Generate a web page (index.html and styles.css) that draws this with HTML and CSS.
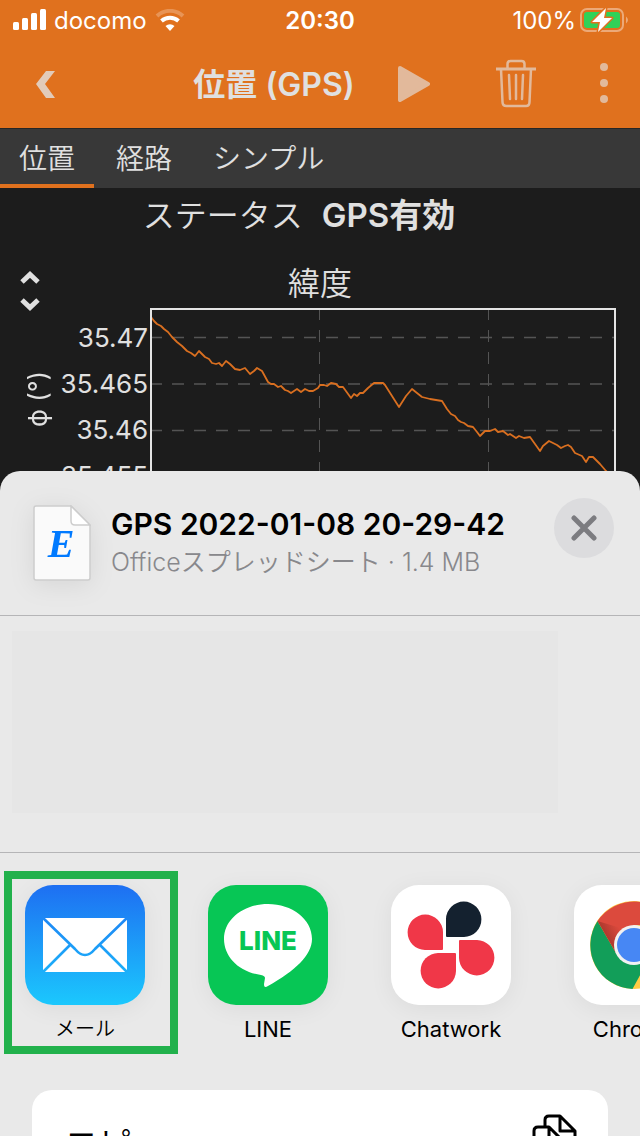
FILE: index.html
```html
<!DOCTYPE html>
<html lang="ja">
<head>
  <meta charset="UTF-8">
  <meta name="viewport" content="width=device-width, initial-scale=1.0">
  <title>位置 (GPS)</title>
  <link rel="stylesheet" href="styles.css">
</head>
<body>

<header class="top">
  <div class="status-bar">
    <div class="carrier">
      <svg width="34" height="22" viewBox="0 0 34 22" fill="#fff">
        <rect x="1" y="13" width="6" height="8" rx="1.5"/>
        <rect x="10" y="9" width="6" height="12" rx="1.5"/>
        <rect x="19" y="4" width="6" height="17" rx="1.5"/>
        <rect x="28" y="0" width="6" height="21" rx="1.5"/>
      </svg>
      <span>docomo</span>
      <svg width="30" height="22" viewBox="0 0 30 22" fill="none" stroke="#fff">
        <path d="M2 7A19 19 0 0 1 28 7" stroke-width="4" opacity=".25"/>
        <path d="M6.500 12A13 13 0 0 1 23.500 12" stroke-width="4"/>
        <path d="M15 22L10.500 17A7 7 0 0 1 19.500 17Z" fill="#fff" stroke="none"/>
      </svg>
    </div>
    <time class="clock">20:30</time>
    <div class="battery">
      <span>100%</span>
      <svg width="48" height="24" viewBox="0 0 48 24">
        <rect x="1" y="1" width="42" height="22" rx="6" fill="none" stroke="#fff" stroke-opacity=".4" stroke-width="2"/>
        <path d="M46 8.500Q50 12 46 15.500Z" fill="#fff" opacity=".4"/>
        <rect x="4" y="4" width="36" height="16" rx="3" fill="#30d158"/>
        <path d="M26 0L12 14H20L18 24L32 10H24Z" fill="#fff" stroke="#e0711e" stroke-width="3" stroke-linejoin="round" paint-order="stroke"/>
      </svg>
    </div>
  </div>

  <div class="app-bar">
    <button class="back" aria-label="戻る">
      <svg width="19" height="28" viewBox="0 0 19 28"><path d="M10 1H19L9 14L19 28H10L0 14Z" fill="#e2cbb9"/></svg>
    </button>
    <h1>位置 (GPS)</h1>
    <button class="play" aria-label="開始">
      <svg width="32" height="36" viewBox="0 0 32 36"><path d="M2 2L30 18L2 34Z" fill="#e2b99b" stroke="#e2b99b" stroke-width="4" stroke-linejoin="round"/></svg>
    </button>
    <button class="trash" aria-label="削除">
      <svg width="42" height="50" viewBox="0 0 42 50" fill="none" stroke="#e2b99b" stroke-width="2.500">
        <path d="M1 10H41" stroke-width="3"/>
        <path d="M12.500 9V5Q12.500 2 15.500 2H26.500Q29.500 2 29.500 5V9"/>
        <path d="M6 10L7.500 43Q7.500 47 11.500 47H31Q34.500 47 34.500 43L36 10"/>
        <path d="M14 16L15 40M21 16V40M28 16L27 40" stroke-linecap="round"/>
      </svg>
    </button>
    <button class="more" aria-label="メニュー">
      <svg width="8" height="42" viewBox="0 0 8 42" fill="#e2b99b"><circle cx="4" cy="4" r="4"/><circle cx="4" cy="20" r="4"/><circle cx="4" cy="36" r="4"/></svg>
    </button>
  </div>
</header>

<nav class="tabs">
  <a href="#position" class="active">位置</a>
  <a href="#route">経路</a>
  <a href="#simple">シンプル</a>
</nav>

<main>
  <p class="gps-status">ステータス <strong>GPS有効</strong></p>

  <section class="chart">
    <div class="axis">
      <button class="sort" aria-label="並べ替え">
        <svg width="20" height="40" viewBox="0 0 20 40" fill="none" stroke="#e0e0e0" stroke-width="5"><path d="M2 11L10 3.500L18 11"/><path d="M2 29L10 36.500L18 29"/></svg>
      </button>
      <span class="unit">ϕ (°)</span>
    </div>
    <ul class="ticks">
      <li>35.47</li>
      <li>35.465</li>
      <li>35.46</li>
      <li>35.455</li>
    </ul>
    <figure>
      <figcaption>緯度</figcaption>
      <svg class="plot" viewBox="0 0 466 192" preserveAspectRatio="none" fill="none">
        <g stroke="#545454" stroke-dasharray="12 10">
          <path d="M0 29.500H466M0 76H466M0 122.500H466" stroke-width="1.500"/>
          <path d="M169.500 0V192M338.500 0V192"/>
        </g>
        <polyline stroke="#d96f20" stroke-width="1.800" stroke-linejoin="round" points="1,9 4,13 7,16 11,18 14,21 18,24 22,29 27,34 32,38 37,43 41,45 45,48 49,43 52,46 55,49 59,51 62,55 66,56 69,55 72,58 76,53 80,56 85,61 90,62 95,60 100,66 104,63 107,60 112,63 118,74 121,76 124,76 128,79 131,78 135,82 138,83 141,85 144,83 147,81 151,84 155,81 159,83 163,83 168,80 170,77 174,77 177,78 181,75 186,76 189,79 193,79 201,90 204,86 207,88 210,85 213,85 218,80 224,75 233,75 235,77 242,88 249,99 256,88 262,81 267,85 272,89 276,90 280,91 286,92 292,93 297,101 301,106 305,108 308,112 311,114 314,115 318,118 323,119 327,124 330,128 335,123 340,123 345,121 348,124 353,123 358,127 360,126 366,130 369,128 374,130 380,129 385,136 390,143 393,138 399,133 403,135 407,137 411,140 415,138 418,137 421,139 425,145 432,148 436,154 439,149 443,149 450,156 456,163 466,172"/>
        <path d="M1 192V1H465V192" stroke="#e4e4e4" stroke-width="2"/>
      </svg>
    </figure>
  </section>
</main>

<section class="sheet">
  <div class="sheet-header">
    <svg class="file-icon" width="58" height="76" viewBox="0 0 58 76">
      <path d="M3 1H38L57 20V73Q57 75 55 75H3Q1 75 1 73V3Q1 1 3 1Z" fill="#fafafa" stroke="#cdcdcd" stroke-width="1.500"/>
      <path d="M38 1V16Q38 20 42 20H57Z" fill="#fff" stroke="#cdcdcd" stroke-width="1.500"/>
      <text class="file-letter" x="28" y="52" text-anchor="middle">E</text>
    </svg>
    <div class="file-info">
      <h2>GPS 2022-01-08 20-29-42</h2>
      <p>Officeスプレッドシート · 1.4 MB</p>
    </div>
    <button class="close" aria-label="閉じる">
      <svg width="26" height="26" viewBox="0 0 26 26" stroke="#7c7c80" stroke-width="5" stroke-linecap="round"><path d="M3 3L23 23M23 3L3 23"/></svg>
    </button>
  </div>

  <div class="people">
    <div class="people-blank"></div>
  </div>

  <div class="apps">
    <a href="#mail" class="app selected">
      <svg class="app-icon" viewBox="0 0 120 120">
        <defs>
          <linearGradient id="sky" x1="0" y1="0" x2="0" y2="1"><stop offset="0" stop-color="#1e6ff2"/><stop offset="1" stop-color="#1bc8fd"/></linearGradient>
          <mask id="folds">
            <rect x="18" y="33" width="84" height="54" rx="2" fill="#fff"/>
            <path d="M17 32L50 64Q60 76 70 64L103 32M17 88L45 60M103 88L75 60" fill="none" stroke="#000" stroke-width="2.600"/>
          </mask>
        </defs>
        <rect width="120" height="120" fill="url(#sky)"/>
        <rect x="18" y="33" width="84" height="54" fill="#fff" mask="url(#folds)"/>
      </svg>
      <span>メール</span>
    </a>
    <a href="#line" class="app">
      <svg class="app-icon" viewBox="0 0 120 120">
        <rect width="120" height="120" fill="#07c655"/>
        <path d="M60 19C84 19 104 34 104 54C104 70 87 86 60 101C57 103 56 102 56 99L57 93Q57 91 53 90C31 87 16 72 16 54C16 34 36 19 60 19Z" fill="#fff"/>
        <text class="line-mark" x="60" y="65" text-anchor="middle">LINE</text>
      </svg>
      <span>LINE</span>
    </a>
    <a href="#chatwork" class="app">
      <svg class="app-icon" viewBox="0 0 120 120">
        <rect width="120" height="120" fill="#fff"/>
        <path d="M55 51V34A17.700 17.700 0 1 1 73 52H56Q55 52 55 51Z" fill="#14212f"/>
        <g fill="#f03748">
          <path d="M51 65H34A17.700 17.700 0 1 1 52 47V64Q52 65 51 65Z"/>
          <path d="M69 55H86A17.700 17.700 0 1 1 68 73V56Q68 55 69 55Z"/>
          <path d="M65 69V86A17.700 17.700 0 1 1 47 68H64Q65 68 65 69Z"/>
        </g>
      </svg>
      <span>Chatwork</span>
    </a>
    <a href="#chrome" class="app">
      <svg class="app-icon" viewBox="0 0 120 120">
        <defs>
          <linearGradient id="shade" gradientUnits="userSpaceOnUse" x1="32" y1="52" x2="46" y2="44"><stop offset="0" stop-color="#8e2d24" stop-opacity=".6"/><stop offset="1" stop-color="#8e2d24" stop-opacity="0"/></linearGradient>
        </defs>
        <rect width="120" height="120" fill="#fff"/>
        <circle cx="60" cy="60" r="44" fill="#fc4"/>
        <path d="M23.500 36A44 44 0 0 0 58.500 104L77 70L42 68Z" fill="#129e59"/>
        <path d="M23.500 36A44 44 0 0 1 99 40H60L42 68Z" fill="#dc4a3d"/>
        <path d="M23.500 36L50 44L42 68Z" fill="url(#shade)"/>
        <circle cx="60" cy="60" r="20" fill="#f1f1f1"/>
        <circle cx="60" cy="60" r="17" fill="#4787f4"/>
      </svg>
      <span>Chrome</span>
    </a>
  </div>

  <div class="actions">
    <button class="action">
      <span>コピー</span>
      <svg width="46" height="56" viewBox="0 0 46 56" fill="none" stroke="#000" stroke-width="3" stroke-linejoin="round">
        <path d="M13 12V6Q13 2 17 2H28L43 17V39Q43 43 39 43H32M28 2V17H43"/>
        <path d="M6 13H17L32 28V50Q32 54 28 54H6Q2 54 2 50V17Q2 13 6 13ZM17 13V28H32"/>
      </svg>
    </button>
  </div>
</section>

</body>
</html>
```
FILE: styles.css
```css
*, *::after {
  box-sizing: border-box;
}
body {
  margin: 0;
  height: 100vh;
  overflow: hidden;
  background-color: #1c1c1c;
  color: #e0e0e0;
  font-family: Inter, "Noto Sans CJK JP", sans-serif;
}
h1, h2, p, ul, figure {
  margin: 0;
  padding: 0;
}
button {
  background: none;
  border: none;
  padding: 0;
  color: inherit;
  font-family: inherit;
  cursor: pointer;
}
a {
  color: inherit;
  text-decoration: none;
}
svg {
  display: block;
  flex-shrink: 0;
}

/* top bar */
.top {
  background-color: #e0711e;
}
.status-bar {
  display: grid;
  grid-template-columns: 1fr auto 1fr;
  align-items: center;
  height: 40px;
  padding: 0 12px;
  color: white;
  font-size: 24px;
}
.carrier, .battery {
  display: flex;
  align-items: center;
  gap: 8px;
}
.battery {
  justify-content: flex-end;
  gap: 4px;
}
.clock {
  font-weight: 600;
}
.app-bar {
  display: flex;
  height: 88px;
}
.app-bar button {
  display: flex;
  align-items: center;
  justify-content: center;
}
.app-bar h1 {
  flex: 1;
  text-align: center;
  font-size: 32px;
  font-weight: 600;
  line-height: 90px;
  white-space: nowrap;
}
.app-bar .back {
  width: 158px;
  padding-left: 36px;
  justify-content: flex-start;
}
.app-bar .play {
  width: 74px;
  padding-left: 8px;
  justify-content: flex-start;
}
.trash {
  width: 104px;
}
.more {
  width: 72px;
}

/* tabs */
.tabs {
  display: flex;
  gap: 3px;
  height: 60px;
  background-color: #383838;
  border-top: 1px solid #262626;
}
.tabs a {
  padding: 0 19px;
  font-size: 28px;
  font-weight: 350;
  line-height: 60px;
}
.tabs .active {
  border-bottom: 4px solid #e0711e;
}

/* chart */
.gps-status {
  height: 52px;
  padding-right: 42px;
  text-align: center;
  font-size: 32px;
  font-weight: 350;
  line-height: 54px;
}
.gps-status strong {
  margin-left: 10px;
  font-size: 33px;
  font-weight: 600;
}
.chart {
  display: flex;
  padding-right: 24px;
}
.axis {
  display: flex;
  flex-direction: column;
  align-items: center;
  gap: 60px;
  width: 60px;
  padding-top: 31px;
}
.unit {
  padding-right: 16px;
  font-size: 26px;
  line-height: 32px;
  writing-mode: vertical-rl;
  transform: rotate(180deg);
}
.ticks {
  width: 90px;
  padding-top: 75px;
  padding-right: 2px;
  list-style: none;
  text-align: right;
  font-size: 26px;
  line-height: 46px;
}
figure {
  flex: 1;
}
figcaption {
  height: 68px;
  padding-top: 20px;
  padding-right: 126px;
  text-align: center;
  font-size: 32px;
  font-weight: 350;
  line-height: 48px;
}
.plot {
  width: 100%;
  height: 192px;
}

/* share sheet */
.sheet {
  position: relative;
  margin-top: -29px;
  border-radius: 20px 20px 0 0;
  background-color: #e9e9e9;
  color: black;
}
.sheet-header {
  display: flex;
  align-items: center;
  height: 145px;
  padding: 0 26px 0 33px;
  border-bottom: 1px solid #b5b5b7;
}
.file-icon {
  filter: drop-shadow(0 4px 12px rgba(0, 0, 0, 0.08));
}
.file-letter {
  font-family: "Liberation Serif", serif;
  font-size: 40px;
  font-style: italic;
  font-weight: bold;
  fill: #007aff;
}
.file-info {
  flex: 1;
  margin-left: 20px;
  white-space: nowrap;
}
.file-info h2 {
  font-size: 30px;
  font-weight: 600;
  line-height: 38px;
}
.file-info p {
  color: #88888c;
  font-size: 25px;
  font-weight: 350;
  line-height: 38px;
}
.close {
  display: flex;
  align-items: center;
  justify-content: center;
  width: 60px;
  height: 60px;
  margin-bottom: 30px;
  border-radius: 50%;
  background-color: #dcdcde;
}
.people {
  height: 237px;
  padding: 15px 82px 0 12px;
  border-bottom: 1px solid #b5b5b7;
}
.people-blank {
  height: 182px;
  background-color: #e6e6e6;
}
.apps {
  display: flex;
  gap: 63px;
  height: 237px;
  padding: 32px 0 0 25px;
  overflow: hidden;
}
.app {
  position: relative;
  flex: 0 0 120px;
  text-align: center;
  font-size: 22px;
}
.app-icon {
  width: 120px;
  height: 120px;
  margin-bottom: 8px;
  border-radius: 28px;
  box-shadow: 0 4px 24px rgba(0, 0, 0, 0.06);
}
.app span {
  line-height: 32px;
}
.selected span {
  font-size: 20px;
  font-weight: 350;
}
.selected::after {
  content: "";
  position: absolute;
  top: -14px;
  left: -21px;
  width: 174px;
  height: 183px;
  border: 8px solid #22b14c;
}
.line-mark {
  font-size: 26px;
  font-weight: 800;
  fill: #07c655;
}
.actions {
  margin: 0 32px;
  border-radius: 20px;
  background-color: white;
}
.action {
  display: flex;
  align-items: center;
  justify-content: space-between;
  width: 100%;
  height: 104px;
  padding: 0 30px 0 32px;
  font-size: 34px;
  font-weight: 350;
}
```
